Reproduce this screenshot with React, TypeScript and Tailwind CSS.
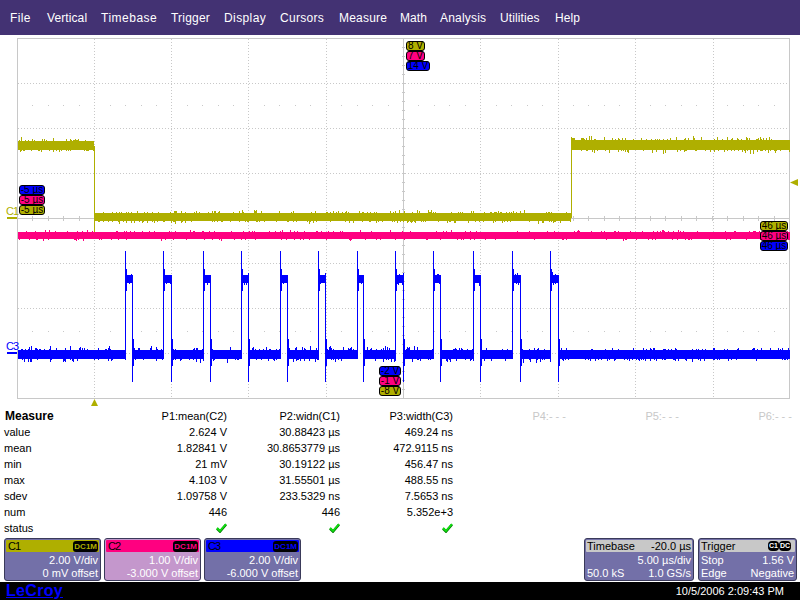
import React from "react";

const FONT = "[font-family:'Liberation_Sans',Arial,sans-serif]";

function rng(seed: number) {
  let s = seed;
  return () => {
    s = (s * 1664525 + 1013904223) % 4294967296;
    return s / 4294967296;
  };
}

function noise(x0: number, x1: number, top: number, bot: number, amp: number, seed: number) {
  const r = rng(seed);
  let d = "";
  for (let x = x0; x <= x1; x++) {
    const a = r() < 0.5 ? Math.floor(r() * r() * amp * 1.3) : 0;
    const b = r() < 0.5 ? Math.floor(r() * r() * amp * 1.3) : 0;
    d += `M${x + 0.5} ${top - a}V${bot + b}`;
  }
  return d;
}

const GridLines = () => {
  const xs = [94, 171, 248, 326, 480, 558, 635, 713];
  const ys = [83, 128, 173, 263, 308, 353];
  const ticksX: number[] = [];
  for (let i = 0; i <= 50; i++) ticksX.push(Math.round(17 + i * 15.44));
  const ticksY: number[] = [];
  for (let i = 0; i <= 40; i++) ticksY.push(38 + i * 9);
  return (
    <g shapeRendering="crispEdges" fill="none">
      {xs.map((x) => (
        <path key={x} d={`M${x + 0.5} 39V398`} stroke="#c8c8c8" strokeDasharray="1 2" />
      ))}
      {ys.map((y) => (
        <path key={y} d={`M18 ${y + 0.5}H789`} stroke="#c8c8c8" strokeDasharray="1 2" />
      ))}
      <path d="M17.5 38.5H789.5V398.5H17.5Z" stroke="#c8c8c8" />
      <path d="M18 218.5H789M403.5 39V398" stroke="#c8c8c8" />
      {ticksX.map((x) => (
        <path key={x} d={`M${x + 0.5} 216V221`} stroke="#c8c8c8" />
      ))}
      {ticksY.map((y) => (
        <path key={y} d={`M402 ${y + 0.5}H405`} stroke="#c8c8c8" />
      ))}
      {ticksX.map((x) =>
        (x - 17) % 77 < 3 ? null : (
          <React.Fragment key={x}>
            <rect x={x} y={105} width={1} height={1} fill="#c8c8c8" />
            <rect x={x} y={331} width={1} height={1} fill="#c8c8c8" />
          </React.Fragment>
        )
      )}
    </g>
  );
};

const Waves = () => {
  const olive = "#afaf00";
  const pink = "#ff0080";
  const blue = "#0000ff";
  const pulses: [number, number][] = [
    [125, 132], [163, 171], [203, 210], [241, 248], [280, 287], [318, 325],
    [357, 363], [395, 403], [433, 440], [473, 480], [512, 520], [550, 558],
  ];
  let bluePath = "";
  let prev = 18;
  pulses.forEach(([a, b], i) => {
    bluePath += noise(prev, a, 350, 359, 4, 100 + i);
    bluePath += noise(a + 1, b, 275, 283, 3, 200 + i);
    bluePath += `M${a + 0.5} 251V352M${a + 1.5} 269V291M${b + 0.5} 278V382M${b + 1.5} 339V366`;
    prev = b + 2;
  });
  bluePath += noise(prev, 789, 350, 359, 3, 300);
  return (
    <g shapeRendering="crispEdges" fill="none" strokeWidth={1}>
      <path d={noise(18, 93, 141, 150, 4, 1)} stroke={olive} />
      <path d={noise(95, 570, 213, 221, 3, 2)} stroke={olive} />
      <path d={noise(572, 789, 140, 150, 4, 3)} stroke={olive} />
      <path d="M94.5 146V232M571.5 137V218" stroke={olive} />
      <path d={noise(18, 789, 232, 239, 2, 4)} stroke={pink} />
      <path d={bluePath} stroke={blue} />
    </g>
  );
};

const Tag = ({ bg, children, className }: { bg: string; children: string; className: string }) => (
  <div
    className={`absolute h-[10px] rounded-[3px] border border-black text-[10px] leading-[8px] text-black flex justify-center whitespace-nowrap ${bg} ${className}`}
  >
    {children}
  </div>
);

const Check = () => (
  <svg width="11" height="10" viewBox="0 0 11 10" className="ml-auto">
    <path d="M1 5.5 L4 8.5 L10 1.5" fill="none" stroke="#007a00" strokeWidth="2.6" />
    <path d="M1 5 L4 8 L10 1" fill="none" stroke="#10e010" strokeWidth="1.8" />
  </svg>
);

const rows: [string, string, string, string][] = [
  ["value", "2.624 V", "30.88423 µs", "469.24 ns"],
  ["mean", "1.82841 V", "30.8653779 µs", "472.9115 ns"],
  ["min", "21 mV", "30.19122 µs", "456.47 ns"],
  ["max", "4.103 V", "31.55501 µs", "488.55 ns"],
  ["sdev", "1.09758 V", "233.5329 ns", "7.5653 ns"],
  ["num", "446", "446", "5.352e+3"],
];

const menu = [
  ["File", "w-[37px] tracking-[0.4px]"],
  ["Vertical", "w-[54px] tracking-[0.1px]"],
  ["Timebase", "w-[70px] tracking-[0.5px]"],
  ["Trigger", "w-[53px] tracking-[0.2px]"],
  ["Display", "w-[56px] tracking-[0.4px]"],
  ["Cursors", "w-[59px] tracking-[0.3px]"],
  ["Measure", "w-[61px] tracking-[0.2px]"],
  ["Math", "w-[40px] tracking-[0.1px]"],
  ["Analysis", "w-[60px] tracking-[0.2px]"],
  ["Utilities", "w-[55px] tracking-[0.1px]"],
  ["Help", "w-[30px] tracking-[0.1px]"],
];

const Channel = ({ name, bar, box, scale, offset, badge }: { name: string; bar: string; box: string; scale: string; offset: string; badge: string }) => (
  <div className={`w-[97px] ${box} h-[43px] rounded-[3px] border border-[#3a3a5a] p-[1px] flex flex-col`}>
    <div className={`${bar} h-[12px] flex items-center justify-between rounded-[1px] pl-[2px] pr-[1px] shrink-0 text-black`}>
      <span className="text-[11px] leading-[11px] tracking-[-1px]">{name}</span>
      <span className={`bg-black rounded-[3px] px-[1px] h-[11px] text-[8px] leading-[11px] font-bold ${badge}`}>DC1M</span>
    </div>
    <div className="text-right pr-[1px] text-[11px] leading-[13px] mt-[2px] text-white whitespace-nowrap">{scale}</div>
    <div className="text-right pr-[1px] text-[11px] leading-[13px] text-white whitespace-nowrap">{offset}</div>
  </div>
);

export default function App() {
  return (
    <div className={`w-[800px] h-[600px] overflow-hidden bg-white flex flex-col ${FONT}`}>
      <div className="h-[35px] shrink-0 bg-[#433273] flex items-center pl-[10px] text-[12px] text-white">
        {menu.map(([m, w]) => (
          <span key={m} className={`${w} shrink-0`}>{m}</span>
        ))}
      </div>

      <div className="relative h-[372px] shrink-0">
        <svg width="800" height="372" viewBox="0 35 800 372" className="block">
          <GridLines />
          <Waves />
          <rect x="7" y="217" width="10" height="2" fill="#afaf00" />
          <rect x="7" y="352" width="10" height="2" fill="#0000ff" />
          <path d="M94.5 399L98 406H91Z" fill="#afaf00" />
          <path d="M790 182.5L798 179V186Z" fill="#afaf00" />
        </svg>
        <div className="absolute left-[6px] top-[170px] text-[11px] leading-[12px] tracking-[-1px] text-[#afaf00]">C1</div>
        <div className="absolute left-[6px] top-[305px] text-[11px] leading-[12px] tracking-[-1px] text-[#0000ff]">C3</div>

        <Tag bg="bg-[#afaf00]" className="left-[406px] top-[6px] w-[19px]">8 V</Tag>
        <Tag bg="bg-[#ff0080]" className="left-[406px] top-[16px] w-[19px]">7 V</Tag>
        <Tag bg="bg-[#0000ff]" className="left-[406px] top-[26px] w-[24px]">14 V</Tag>

        <Tag bg="bg-[#0000ff]" className="left-[19px] top-[150px] w-[26px]">-5 µs</Tag>
        <Tag bg="bg-[#ff0080]" className="left-[19px] top-[160px] w-[26px]">-5 µs</Tag>
        <Tag bg="bg-[#afaf00]" className="left-[19px] top-[170px] w-[26px]">-5 µs</Tag>

        <Tag bg="bg-[#afaf00]" className="left-[760px] top-[186px] w-[28px]">46 µs</Tag>
        <Tag bg="bg-[#ff0080]" className="left-[760px] top-[196px] w-[28px]">46 µs</Tag>
        <Tag bg="bg-[#0000ff]" className="left-[760px] top-[206px] w-[28px]">46 µs</Tag>

        <Tag bg="bg-[#0000ff]" className="left-[379px] top-[331px] w-[22px]">-2 V</Tag>
        <Tag bg="bg-[#ff0080]" className="left-[379px] top-[341px] w-[22px]">-1 V</Tag>
        <Tag bg="bg-[#afaf00]" className="left-[379px] top-[351px] w-[22px]">-8 V</Tag>
      </div>

      <div className="h-[131px] shrink-0 pt-[1px] pl-[4px] grid grid-cols-[100px_123px_113px_113px_113px_113px_113px] auto-rows-[16px] items-center text-[11px] leading-[16px] text-black">
        <span className="font-bold text-[12px] pl-[1px]">Measure</span>
        <span className="text-right">P1:mean(C2)</span>
        <span className="text-right">P2:widn(C1)</span>
        <span className="text-right">P3:width(C3)</span>
        <span className="text-right text-[#c8c8c8]">P4:- - -</span>
        <span className="text-right text-[#c8c8c8]">P5:- - -</span>
        <span className="text-right text-[#c8c8c8]">P6:- - -</span>
        {rows.map((r) => (
          <React.Fragment key={r[0]}>
            <span>{r[0]}</span>
            <span className="text-right">{r[1]}</span>
            <span className="text-right">{r[2]}</span>
            <span className="text-right">{r[3]}</span>
            <span /><span /><span />
          </React.Fragment>
        ))}
        <span>status</span>
        <Check /><Check /><Check />
      </div>

      <div className="h-[44px] shrink-0 pl-[4px] pr-[3px] flex items-start gap-[3px] text-white">
        <Channel name="C1" box="bg-[#7370a8]" bar="bg-[#afaf00]" badge="text-[#afaf00]" scale="2.00 V/div" offset="0 mV offset" />
        <Channel name="C2" box="bg-[#c497cc]" bar="bg-[#ff0080]" badge="text-[#ff0080]" scale="1.00 V/div" offset="-3.000 V offset" />
        <Channel name="C3" box="bg-[#7370a8]" bar="bg-[#0000ff]" badge="text-[#0000ff]" scale="2.00 V/div" offset="-6.000 V offset" />

        <div className="ml-auto w-[110px] h-[43px] rounded-[3px] bg-[#7370a8] border border-[#3a3a5a] p-[1px] text-[11px] leading-[13px]">
          <div className="h-[12px] bg-[#c8c8c8] text-black flex justify-between rounded-[1px] px-[1px] leading-[12px]">
            <span>Timebase</span><span>-20.0 µs</span>
          </div>
          <div className="text-right pr-[1px] mt-[2px]">5.00 µs/div</div>
          <div className="flex justify-between px-[1px]"><span>50.0 kS</span><span>1.0 GS/s</span></div>
        </div>
        <div className="ml-[1px] w-[99px] h-[43px] rounded-[3px] bg-[#7370a8] border border-[#3a3a5a] p-[1px] text-[11px] leading-[13px]">
          <div className="h-[12px] bg-[#c8c8c8] text-black flex justify-between items-center rounded-[1px] pl-[1px] pr-[4px] leading-[12px]">
            <span>Trigger</span>
            <span className="flex">
              <span className="bg-black text-white rounded-[4px] text-[7px] leading-[10px] w-[11px] text-center font-bold">C1</span>
              <span className="bg-black text-white rounded-[4px] text-[7px] leading-[10px] w-[12px] text-center font-bold">DC</span>
            </span>
          </div>
          <div className="flex justify-between px-[1px] mt-[2px]"><span>Stop</span><span>1.56 V</span></div>
          <div className="flex justify-between px-[1px]"><span>Edge</span><span>Negative</span></div>
        </div>
      </div>

      <div className="flex-1 bg-black flex items-center justify-between pl-[6px] pr-[16px]">
        <span className="text-[16px] leading-[18px] font-bold tracking-[0.3px] text-[#0000ff] underline">LeCroy</span>
        <span className="text-[11px] leading-[18px] text-white">10/5/2006 2:09:43 PM</span>
      </div>
    </div>
  );
}
